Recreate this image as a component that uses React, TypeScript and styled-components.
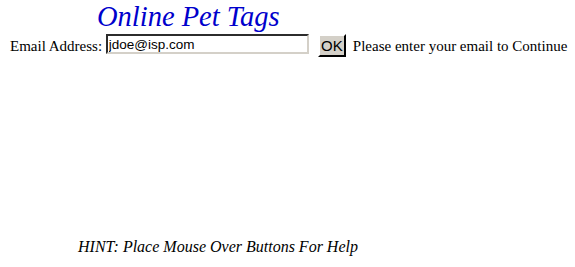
import styled, { createGlobalStyle } from "styled-components";

const GlobalStyle = createGlobalStyle`
  html, body {
    margin: 0;
    padding: 0;
    background: #ffffff;
  }
  body {
    font-family: "Liberation Serif", "Times New Roman", serif;
    font-size: 15px;
    color: #000000;
  }
`;

const Page = styled.div`
  display: flex;
  flex-direction: column;
  padding: 1px 0 0 10px;
  height: 267px;
  box-sizing: border-box;
`;

const Title = styled.h1`
  margin: 0 0 0 87px;
  font-family: "Liberation Serif", "Times New Roman", serif;
  font-style: italic;
  font-weight: normal;
  font-size: 28.5px;
  line-height: 31px;
  color: #0000cc;
`;

const Row = styled.form`
  display: flex;
  align-items: flex-start;
  margin-top: 2px;
  height: 24px;
`;

const Label = styled.label`
  padding-top: 4px;
  font-size: 15px;
  line-height: 17px;
  white-space: pre;
`;

const EmailInput = styled.input`
  box-sizing: border-box;
  width: 203px;
  height: 20px;
  margin: 0;
  padding: 0 1px;
  font-family: "Liberation Sans", Arial, sans-serif;
  font-size: 13.5px;
  color: #000000;
  background: #ffffff;
  border: 2px inset #d4d0c8;
  border-top-color: #808080;
  border-left-color: #808080;
  border-right-color: #d4d0c8;
  border-bottom-color: #d4d0c8;
  outline: none;
`;

const OkButton = styled.button`
  box-sizing: border-box;
  width: 28px;
  height: 23px;
  margin: 0 7px 0 9px;
  padding: 0;
  font-family: "Liberation Sans", Arial, sans-serif;
  font-size: 15px;
  color: #000000;
  background: #d4d0c8;
  border: 2px outset #d4d0c8;
  border-top-color: #ffffff;
  border-left-color: #ffffff;
  border-right-color: #404040;
  border-bottom-color: #404040;
`;

const Notice = styled.span`
  padding-top: 4px;
  font-size: 15px;
  line-height: 17px;
  white-space: nowrap;
`;

const Hint = styled.p`
  margin: auto 0 12px 68px;
  font-style: italic;
  font-size: 16px;
  line-height: 17px;
`;

export default function App() {
  return (
    <>
      <GlobalStyle />
      <Page>
        <Title>Online Pet Tags</Title>
        <Row onSubmit={(e) => e.preventDefault()}>
          <Label htmlFor="email">Email Address: </Label>
          <EmailInput id="email" name="email" defaultValue="jdoe@isp.com" />
          <OkButton type="submit">OK</OkButton>
          <Notice>Please enter your email to Continue</Notice>
        </Row>
        <Hint>HINT: Place Mouse Over Buttons For Help</Hint>
      </Page>
    </>
  );
}
